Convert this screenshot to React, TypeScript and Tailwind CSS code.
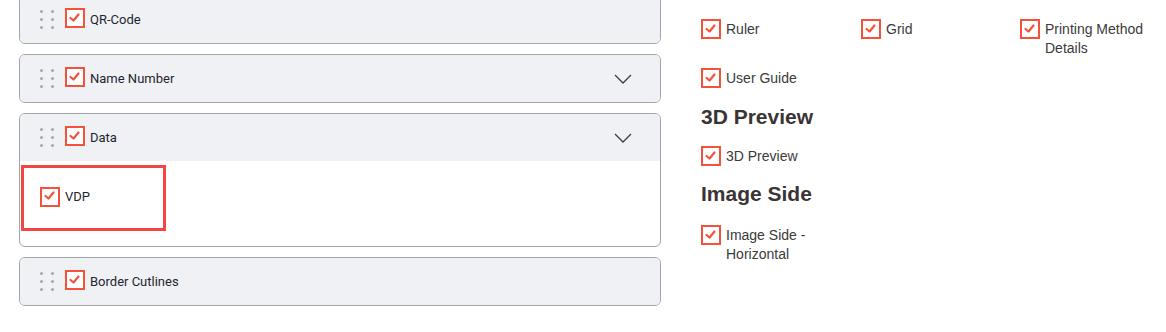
import { ReactNode } from "react";

const sans = { fontFamily: "Roboto, 'Liberation Sans', sans-serif" };

function Check({ size = 20 }: { size?: number }) {
	return (
		<span
			className="shrink-0 inline-flex items-center justify-center border-2 border-[#f4523b] bg-white"
			style={{ width: size, height: size }}
		>
			<svg width="16" height="16" viewBox="0 0 16 16" className="-mt-[3px]">
				<path d="M3.5 9 L6.5 11.5 L11.5 5.5" fill="none" stroke="#f4523b" strokeWidth="2.2" strokeLinecap="round" strokeLinejoin="round" />
			</svg>
		</span>
	);
}

function Dots() {
	return (
		<div className="grid grid-cols-2 gap-x-[8px] gap-y-[5px] w-[13px]">
			{[0, 1, 2, 3, 4, 5].map((i) => (
				<span key={i} className="w-[3px] h-[3px] rounded-full bg-[#a3a8b3]" />
			))}
		</div>
	);
}

function Chevron() {
	return (
		<svg width="18" height="10" viewBox="0 0 18 10" className="mr-[28px]">
			<path d="M1 1 L9 9 L17 1" fill="none" stroke="#3a3f47" strokeWidth="1.3" />
		</svg>
	);
}

function Panel({ label, chevron, children }: { label: string; chevron?: boolean; children?: ReactNode }) {
	return (
		<div className="border border-[#a2a5ab] rounded-[6px] overflow-hidden bg-white">
			<div className="h-[47px] bg-[#f0f1f5] flex items-center pl-[20px]">
				<Dots />
				<div className="ml-[12px]">
					<Check size={20} />
				</div>
				<span className="ml-[5px] text-[13px] text-[#1f2530]" style={sans}>
					{label}
				</span>
				<div className="flex-1" />
				{chevron && <Chevron />}
			</div>
			{children}
		</div>
	);
}

function Opt({ label }: { label: string }) {
	return (
		<div className="flex items-start gap-[5px]">
			<Check size={20} />
			<span className="text-[14px] leading-[19px] text-[#3a3a3a] pt-[1px]">{label}</span>
		</div>
	);
}

export default function App() {
	return (
		<div className="w-[1166px] h-[332px] overflow-hidden bg-white" style={{ fontFamily: "'Liberation Sans', Arial, sans-serif" }}>
			<div className="flex pl-[19px] -mt-[5px]">
				<div className="w-[642px] flex flex-col gap-[10px]">
					<Panel label="QR-Code" />
					<Panel label="Name Number" chevron />
					<Panel label="Data" chevron>
						<div className="h-[85px] pt-[4px] pl-[1px]">
							<div className="w-[145px] h-[66px] border-[3px] border-[#f44545] flex items-center pl-[16px] pb-[3px]">
								<Check size={20} />
								<span className="ml-[5px] text-[13px] text-[#1f2530]" style={sans}>
									VDP
								</span>
							</div>
						</div>
					</Panel>
					<Panel label="Border Cutlines" />
				</div>

				<div className="ml-[40px] pt-[24px] w-[460px]">
					<div className="grid grid-cols-[160px_159px_140px] gap-y-[10px]">
						<Opt label="Ruler" />
						<Opt label="Grid" />
						<div className="w-[134px]">
							<Opt label="Printing Method Details" />
						</div>
						<Opt label="User Guide" />
					</div>
					<h2 className="mt-[17px] mb-[17px] text-[21px] leading-[24px] font-bold text-[#3b3434]">3D Preview</h2>
					<Opt label="3D Preview" />
					<h2 className="mt-[16px] mb-[19px] text-[21px] leading-[24px] font-bold text-[#3b3434]">Image Side</h2>
					<div className="w-[134px]">
						<Opt label="Image Side - Horizontal" />
					</div>
				</div>
			</div>
		</div>
	);
}
